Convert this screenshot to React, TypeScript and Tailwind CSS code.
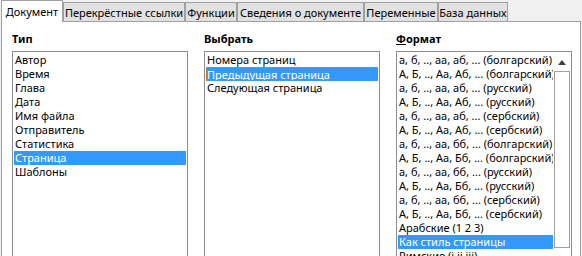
import React from "react";

const tabs = [
  { label: "Документ", w: "w-[62px]", active: true },
  { label: "Перекрёстные ссылки", w: "w-[122px]" },
  { label: "Функции", w: "w-[52px]" },
  { label: "Сведения о документе", w: "w-[127px]" },
  { label: "Переменные", w: "w-[74px]" },
  { label: "База данных", w: "w-[70px]" },
];

const typeItems = [
  "Автор",
  "Время",
  "Глава",
  "Дата",
  "Имя файла",
  "Отправитель",
  "Статистика",
  "Страница",
  "Шаблоны",
];

const selectItems = ["Номера страниц", "Предыдущая страница", "Следующая страница"];

const formatItems = [
  "а, б, .., аа, аб, ... (болгарский)",
  "А, Б, .., Аа, Аб, ... (болгарский)",
  "а, б, .., аа, аб, ... (русский)",
  "А, Б, .., Аа, Аб, ... (русский)",
  "а, б, .., аа, аб, ... (сербский)",
  "А, Б, .., Аа, Аб, ... (сербский)",
  "а, б, .., аа, бб, ... (болгарский)",
  "А, Б, .., Аа, Бб, ... (болгарский)",
  "а, б, .., аа, бб, ... (русский)",
  "А, Б, .., Аа, Бб, ... (русский)",
  "а, б, .., аа, бб, ... (сербский)",
  "А, Б, .., Аа, Бб, ... (сербский)",
  "Арабские (1 2 3)",
  "Как стиль страницы",
  "Римские (i ii iii)",
];

function Row({ text, selected, focus }: { text: string; selected?: boolean; focus?: boolean }) {
  return (
    <div
      className={
        "h-[14px] leading-[14px] whitespace-nowrap overflow-hidden " +
        (selected ? "bg-[#3399ff] text-white " : "text-black ") +
        (focus ? "border border-dotted border-[#c0803a] leading-[12px]" : "pl-px")
      }
    >
      {text}
    </div>
  );
}

export default function App() {
  return (
    <div className="w-[582px] h-[256px] bg-[#f0f0f0] overflow-hidden font-['Noto_Sans',sans-serif] text-[11px] text-black">
      <div className="flex items-end h-[21px] pl-px">
        {tabs.map((t) =>
          t.active ? (
            <div
              key={t.label}
              className={`${t.w} h-[22px] -mb-px relative z-10 bg-white border-l border-t border-r border-[#a0a0a0] flex items-center justify-center leading-none whitespace-nowrap`}
            >
              {t.label}
            </div>
          ) : (
            <div
              key={t.label}
              className={`${t.w} h-[19px] bg-[#e1e1e1] border-l border-t border-r border-[#a0a0a0] flex items-center justify-center leading-none whitespace-nowrap pt-px`}
            >
              {t.label}
            </div>
          )
        )}
      </div>
      <div className="ml-px w-[580px] h-[240px] bg-white border border-[#a0a0a0] pl-[10px] pt-[10px]">
        <div className="flex gap-[16px]">
          <div className="w-[176px]">
            <div className="h-[19px] font-bold leading-[14px]">Тип</div>
            <div className="w-[176px] h-[220px] border border-[#8c8c8c] p-px">
              {typeItems.map((t) => (
                <Row key={t} text={t} selected={t === "Страница"} />
              ))}
            </div>
          </div>
          <div className="w-[176px]">
            <div className="h-[19px] font-bold leading-[14px]">Выбрать</div>
            <div className="w-[176px] h-[220px] border border-[#8c8c8c] p-px">
              {selectItems.map((t) => (
                <Row key={t} text={t} selected={t === "Предыдущая страница"} focus={t === "Предыдущая страница"} />
              ))}
            </div>
          </div>
          <div className="w-[176px]">
            <div className="h-[19px] font-bold leading-[14px]">
              <span className="underline">Ф</span>ормат
            </div>
            <div className="w-[176px] h-[220px] border border-[#8c8c8c] p-px flex">
              <div className="w-[156px] overflow-hidden">
                {formatItems.map((t) => (
                  <Row key={t} text={t} selected={t === "Как стиль страницы"} />
                ))}
              </div>
              <div className="w-[17px] flex flex-col items-center">
                <div className="h-[18px] flex items-center justify-center">
                  <svg width="8" height="5" viewBox="0 0 8 5">
                    <path d="M0 5 L4 0 L8 5 Z" fill="#404040" />
                  </svg>
                </div>
                <div className="w-[16px] h-[177px] border border-[#a0a0a0] bg-white" />
              </div>
            </div>
          </div>
        </div>
      </div>
    </div>
  );
}
